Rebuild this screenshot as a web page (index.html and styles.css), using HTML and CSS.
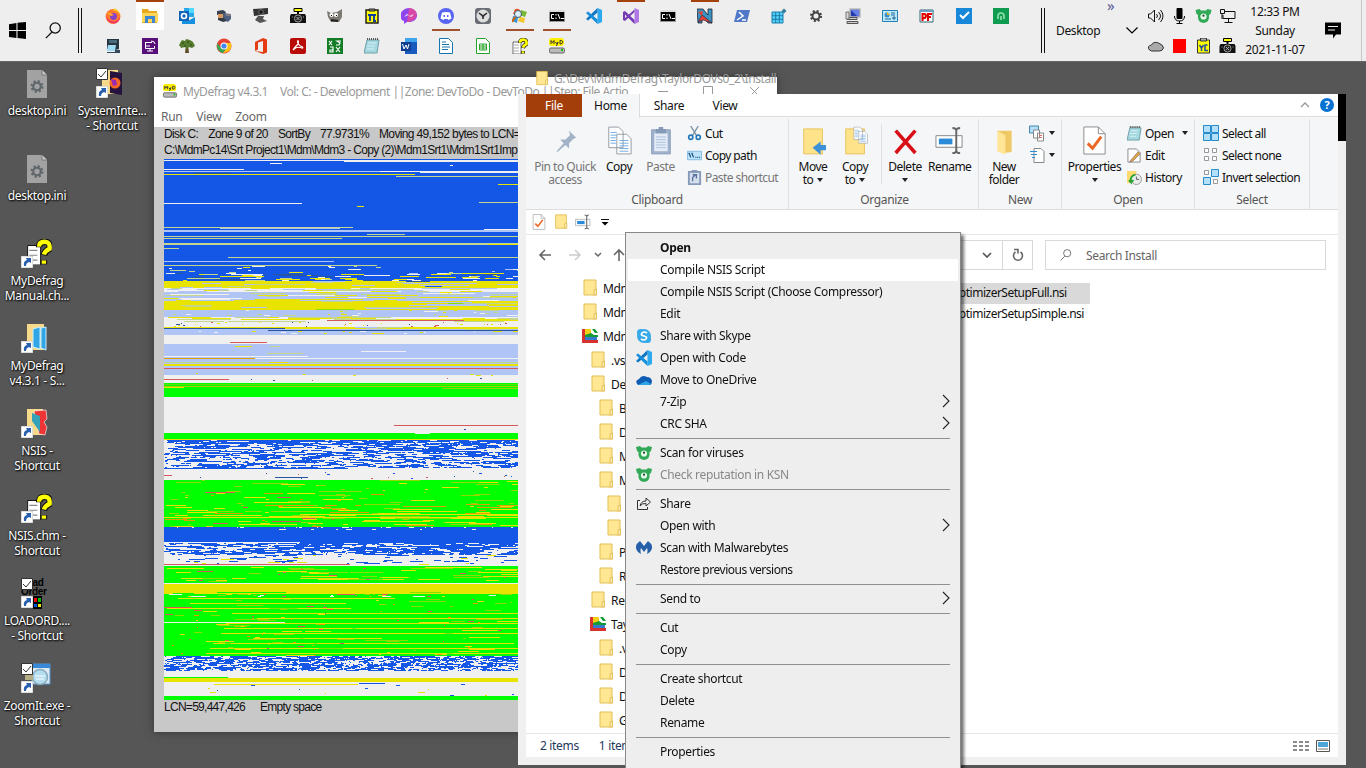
FILE: index.html
```html
<!DOCTYPE html>
<html lang="en">
<head>
<meta charset="utf-8">
<title>Desktop</title>
<link rel="stylesheet" href="styles.css">
</head>
<body>
<svg class="defs" width="0" height="0">
<defs>
<symbol id="folder" viewBox="0 0 16 18"><path d="M2 1h12v15H2z" fill="#ffe793" stroke="#e3bf55"/><path d="M12 16V11l2.500-1v6z" fill="#ffedae" stroke="#dcb548" stroke-width=".8"/></symbol>
<symbol id="firefox" viewBox="0 0 16 16"><circle cx="8" cy="8.500" r="7.400" fill="#ff7a2c"/><path d="M8 2Q9 0 10 .5q5 2 5.500 8-1-4-4-5z" fill="#ffc928"/><path d="M1 8q1 7 8 7.500 6-1 6.300-7-2 5-7 5-5-1-7.300-5.500z" fill="#f5316b"/><circle cx="8.500" cy="8.500" r="3.400" fill="#8540c8"/><path d="M2 5q3-1 5 1l2 1-3 1z" fill="#ffb028"/></symbol>
<symbol id="explorer" viewBox="0 0 16 16"><path d="M0 1h6l1 2h8v12H0z" fill="#e8a820"/><path d="M0 5h16v9H0z" fill="#ffd55a"/><path d="M3 15V8h10v7h-3v-4H6v4z" fill="#3c86d3"/></symbol>
<symbol id="outlook" viewBox="0 0 16 16"><path d="M5 0h10v9H5z" fill="#28a8ea"/><path d="M10 0h5v5h-5z" fill="#50d9ff"/><path d="M3 9l6 4 7-4v7H3z" fill="#1490df"/><path d="M0 3h10v10H0z" fill="#0f64b8"/><circle cx="5" cy="8" r="2.500" fill="none" stroke="#fff" stroke-width="1.600"/></symbol>
<symbol id="guard" viewBox="0 0 16 16"><path d="M1 3l6-1 3 2-1 2-8 1z" fill="#39424e"/><path d="M2 6h5v4H2z" fill="#d89b5d"/><path d="M7 5l8 1v5l-3 3-5-3z" fill="#4c5f81"/><path d="M2 10h6l3 3-4 1-5-2z" fill="#343c47"/><path d="M10 7h5" stroke="#b98"/></symbol>
<symbol id="webcam" viewBox="0 0 16 16"><path d="M0 1l15-1v6L1 8z" fill="#333"/><path d="M5 8h6l-1 3 4 2-7 2-5-3z" fill="#555"/><circle cx="8" cy="4" r="2.300" fill="#111" stroke="#777"/></symbol>
<symbol id="camera" viewBox="0 0 16 16"><path d="M4 .5h8v3H4z" fill="#ff0" stroke="#000"/><path d="M7 4h2v2H7z"/><path d="M1 6h14l1 2v7H0V8z" fill="#111"/><circle cx="8" cy="10.500" r="3.600" fill="#222" stroke="#bbb" stroke-width=".8"/><path d="M6.500 9l3 3m0-3l-3 3M2 9h1m10 0h1" stroke="#aaa"/></symbol>
<symbol id="gimp" viewBox="0 0 16 16"><path d="M0 3l4 2 6-1 5-3v8l-3 5H4L1 9z" fill="#7c7970"/><circle cx="4.500" cy="7" r="2" fill="#fff"/><circle cx="9" cy="7" r="2" fill="#fff"/><path d="M4 7h1v1H4zm5 0h1v1H9z"/><path d="M4 12l7 1" stroke="#222" stroke-width="2"/></symbol>
<symbol id="pi" viewBox="0 0 16 16"><path d="M2 2h12v13H2z" fill="#ff0" stroke="#222" stroke-width="1.500"/><path d="M5 1h6v2H5z" fill="#888" stroke="#222"/><path d="M4 7h8M6 7v6m4-6v6h2" stroke="#123b9d" stroke-width="1.900" fill="none"/></symbol>
<symbol id="messenger" viewBox="0 0 16 16"><path d="M8 0C-3 1-2 12 3 13v3l3-2c13 1 13-13 2-14z" fill="#8e45ed"/><path d="M8 0c12 1 9 14-2 14z" fill="#ed4b91" opacity=".75"/><path d="M3 9l3-3 3 2 4-2-3 3-3-2z" fill="#fff"/></symbol>
<symbol id="discord" viewBox="0 0 16 16"><circle cx="8" cy="8" r="8" fill="#5865f2"/><path d="M4 4.500q4-1 8 0l1.500 6-3 1.500-.7-1H6.200l-.7 1-3-1.500z" fill="#fff"/><path d="M5.500 7h1.500v2H5.500zM9 7h1.500v2H9z" fill="#5865f2"/></symbol>
<symbol id="clock" viewBox="0 0 16 16"><rect width="16" height="16" rx="3" fill="#686d73"/><circle cx="8" cy="8" r="6.500" fill="#ddd"/><path d="M4 5l4 3 4-3M8 8v3" stroke="#222" stroke-width="1.500" fill="none"/><circle cx="8" cy="8" r="1.300" fill="#333"/></symbol>
<symbol id="classic" viewBox="0 0 16 16"><path d="M3 1q3-1 5 1l-1 5-6-1z" fill="#ef5a2b"/><path d="M9 2l6 2-2 5-6-2z" fill="#79b938"/><path d="M1 8l5 1-1 6-5-2z" fill="#3692d6"/><path d="M8 9l5 1-1 5-6-2z" fill="#f6c72b"/><circle cx="6" cy="6" r="3.500" fill="#d7efff" stroke="#456"/><path d="M3 9l-3 5" stroke="#c60" stroke-width="2"/></symbol>
<symbol id="cmd" viewBox="0 0 16 16"><path d="M.5 2.500h15v11H.5z" fill="#000" stroke="#999"/><path d="M0 2h16v2H0z" fill="#ddd"/><path d="M5 6.500H2.500v4H5M7 6v1.500m0 2V11M9 6l2 5m1-.5h3" stroke="#fff" fill="none"/></symbol>
<symbol id="vscode" viewBox="0 0 16 16"><path d="M11.500 0L16 2v12l-4.500 2z" fill="#2ca9ef"/><path d="M11.500 0v4.500L2 12.500 0 11z" fill="#0f77c4"/><path d="M0 5l2-1.500 9.500 8v4.500z" fill="#168fdb"/></symbol>
<symbol id="vs" viewBox="0 0 16 16"><path d="M11.500 0L16 2v12l-4.500 2z" fill="#b078e5"/><path d="M0 4l2-1 9.500 9v4L2 6.500V10l9.500-8.500V4L2 13l-2-1z" fill="#753bb5"/></symbol>
<symbol id="nsis" viewBox="0 0 16 16"><path d="M0 1h6l5 6V1h4v14h-4L5 7v8H1z" fill="#3a93c0" stroke="#223" stroke-width=".8"/><path d="M1 14l4-7 10 8-9-3z" fill="#e44237" stroke="#223" stroke-width=".6"/><path d="M1 4l5-1-1 5z" fill="#e44237"/></symbol>
<symbol id="ps" viewBox="0 0 16 16"><path d="M3 2h13l-3 12H0z" fill="#4f78c8"/><path d="M5 4l4 4-6 4m5 0h4" stroke="#fff" stroke-width="1.500" fill="none"/></symbol>
<symbol id="reg" viewBox="0 0 16 16"><path d="M1 4h11v11H1z" fill="#55cdf4" stroke="#167fae"/><path d="M4.700 4v11m3.700-11v11M1 7.700h11M1 11.300h11" stroke="#167fae"/><path d="M13 .5l2.500 2.500-2.500 2.500L10.500 3z" fill="#397b9b"/></symbol>
<symbol id="gear" viewBox="0 0 16 16"><circle cx="8" cy="8" r="5" fill="none" stroke="currentColor" stroke-width="2.200" stroke-dasharray="2 1.927"/><circle cx="8" cy="8" r="3.500" fill="none" stroke="currentColor" stroke-width="2"/></symbol>
<symbol id="pc" viewBox="0 0 16 16"><path d="M5 1h10v8H5z" fill="#243bb0" stroke="#bbb" stroke-width="1.500"/><path d="M6 2l6 6h2V2z" fill="#6680e5"/><path d="M2 9.500h10v2H2zm0 4h11v2H2z" fill="#ccc" stroke="#555"/><path d="M1 4h3v7H1z" fill="#d8d8d8" stroke="#777"/></symbol>
<symbol id="panel" viewBox="0 0 16 16"><path d="M.5 2.500h15v11H.5z" fill="#bce8fc" stroke="#2580b5"/><circle cx="5" cy="7" r="2.500" fill="#3c8fc5"/><path d="M5 4v3h3z" fill="#fb2"/><path d="M9 5h4M9 7h4m-10 4h6m2-2h2v2h-2z" stroke="#269" fill="none"/></symbol>
<symbol id="pf" viewBox="0 0 16 16"><path d="M1 2h13v12H1z" fill="#fff" stroke="#367"/><path d="M1 2h14v2H1z" fill="#6c9ec4"/><path d="M3.500 13V6H6q2 2 0 4H4m5 3V6h4m-4 3h3" stroke="#e00000" stroke-width="2" fill="none"/></symbol>
<symbol id="todo" viewBox="0 0 16 16"><path d="M0 0h16v16H0z" fill="#1788d9"/><path d="M4 7l3 3 6-6" stroke="#fff" stroke-width="2" fill="none"/></symbol>
<symbol id="green" viewBox="0 0 16 16"><path d="M0 0h16v16H0z" fill="#109c50"/><path d="M5 11V8q0-3 3-3t3 3v3M8 8v4" stroke="#8fdfaa" stroke-width="1.700" fill="none"/></symbol>
<symbol id="diskpc" viewBox="0 0 16 16"><path d="M2 1h12v10H2z" fill="#263640"/><path d="M3 7h8l-1 6H2z" fill="#a0dbf4"/><path d="M10 11l5 1v3H2v-1h8z" fill="#33495a"/><path d="M4 2h8v3H4z" fill="#4a6a7d"/></symbol>
<symbol id="purple" viewBox="0 0 16 16"><path d="M0 0h16v16H0z" fill="#57107a"/><path d="M3 4.500h7M3.500 4v6.500h9V8M9 3q4 0 4 3M5 13h6m-3-2v2M5 7v2m2-2v2" stroke="#fff" fill="none"/></symbol>
<symbol id="tree" viewBox="0 0 16 16"><path d="M7 6h2l1 9H6z" fill="#604f27"/><path d="M1 5l2-3 3 1 1-2 4 1 3 2 2 4-3 2-3-1-2 2-2-2-4 1-1-2H0z" fill="#567b2c"/><path d="M3 5h2m3-1h2m1 3h2M5 8h2" stroke="#2e4c19"/></symbol>
<symbol id="chrome" viewBox="0 0 16 16"><circle cx="8" cy="8" r="7.500" fill="#e94235"/><path d="M1 5q-1 8 6 10l4-5-5 1z" fill="#34a853"/><path d="M8 5h7q2 9-8 10l4-5z" fill="#fbc117"/><circle cx="8" cy="8" r="3.500" fill="#fff"/><circle cx="8" cy="8" r="2.600" fill="#4285f4"/></symbol>
<symbol id="office" viewBox="0 0 16 16"><path d="M2 4l8-4 4 1.500v13L10 16l-8-3 8 1V3L5 4.500v7L2 13z" fill="#e43b13"/></symbol>
<symbol id="acrobat" viewBox="0 0 16 16"><rect width="16" height="16" rx="2" fill="#b80b08"/><path d="M3 12q2-3 5-6 1-4-.5-3 0 4 5 6 1 2-2 .5-4-1-7 2z" fill="none" stroke="#fff" stroke-width="1.200"/></symbol>
<symbol id="xa" viewBox="0 0 16 16"><path d="M0 0h16v16H0z" fill="#137d25"/><path d="M2 3l3 4m0-4L2 7m12-4h-4l3 2-1 2h-3M3 9h3v5H3v-2h3m3-3l4 5m0-5l-4 5" stroke="#fff" stroke-width="1.200" fill="none"/></symbol>
<symbol id="notepad" viewBox="0 0 16 16"><path d="M3 2h12l-2 13H0z" fill="#a4d7df" stroke="#6f9faa"/><path d="M3 1h12" stroke="#555" stroke-width="2" stroke-dasharray="1 1"/><path d="M4 5h8M3 8h8m-8 3h7" stroke="#d5f1f5"/></symbol>
<symbol id="word" viewBox="0 0 16 16"><path d="M4 0h12v16H4z" fill="#185abd"/><path d="M4 0h12v4H4z" fill="#41a5ee"/><path d="M0 4h10v9H0z" fill="#103f91"/><path d="M1.500 6L3 11l2-4 1.500 4L8 6" stroke="#fff" fill="none"/></symbol>
<symbol id="writer" viewBox="0 0 16 16"><path d="M1.500.5h9l4 4v11h-13z" fill="#fff" stroke="#1776ae"/><path d="M4 4h4M4 6.500h7M4 9h8m-8 2.500h6" stroke="#1776ae"/></symbol>
<symbol id="calc" viewBox="0 0 16 16"><path d="M1.500.5h9l4 4v11h-13z" fill="#fff" stroke="#28a329"/><path d="M4.500 6h7v6h-7zm0 2h7m-7 2h7M8 6v6" stroke="#28a329" fill="none"/></symbol>
<symbol id="chm" viewBox="0 0 16 16"><path d="M1 4h8v12H1z" fill="#fff" stroke="#111" stroke-width=".6"/><path d="M2 7h5M2 10h5M2 13h5" stroke="#888" stroke-width=".7"/><path d="M8 5q0-3.300 3.500-3.300t3 4.300q-3 1.500-3.500 4m0 3v2.500" stroke="#111" stroke-width="4" fill="none"/><path d="M8 4.700q0-3 3.500-3t3 4.300q-3 1.500-3.500 3.600m0 3.700v2" stroke="#ff0" stroke-width="2.700" fill="none"/></symbol>
<symbol id="myd" viewBox="0 0 16 16"><rect width="15" height="8" y="0" rx="3" fill="#ffef00"/><path d="M2 6V2.500l1.500 2 1.500-2V6m1.500-2L8 6l1-2-1.500 4M11 6V2.500q4 0 2 3z" stroke="#333" fill="none"/><rect x=".5" y="10" width="15" height="5" rx="1.500" fill="#bbb" stroke="#666"/><path d="M12 12h2" stroke="#1b1" stroke-width="2"/></symbol>
<symbol id="bear" viewBox="0 0 16 16"><path d="M0 2l4-1 1.500 1.500h5L12 1l4 1-1 4-1.500 1q1 7-5.500 8-6.500-1-5.500-8L1 6z" fill="#31a957"/><circle cx="8" cy="8.500" r="3.100" fill="#e5f8ea"/><circle cx="8" cy="7.700" r="1.100" fill="#174827"/></symbol>
<symbol id="cut" viewBox="0 0 16 16"><path d="M4 0l6 10M12 0L6 10" stroke="#8193a4" stroke-width="1.500"/><circle cx="4" cy="12" r="2.200" fill="none" stroke="#2477b8" stroke-width="1.800"/><circle cx="12" cy="12" r="2.200" fill="none" stroke="#2477b8" stroke-width="1.800"/></symbol>
<symbol id="pages" viewBox="0 0 28 32"><path d="M2 1h11l5 5v18H2zM11 9h11l5 5v17H11z" fill="#fff" stroke="#8b949c"/><path d="M4 7h7M4 10h7M4 13h6M4 16h6M4 19h6M14 16h10m-10 3h10m-10 3h10m-10 3h10m-10 3h10" stroke="#65a5e0"/></symbol>
<symbol id="props" viewBox="0 0 24 30"><path d="M1 1h15l7 7v21H1z" fill="#fff" stroke="#8b8b8b"/><path d="M16 1v7h7" stroke="#888" fill="none"/><path d="M5 18l5 5 9-12" stroke="#eb6726" stroke-width="3" fill="none"/></symbol>
<symbol id="rename" viewBox="0 0 30 28"><path d="M1 9h27v12H1z" fill="#fff" stroke="#878787"/><path d="M4 12h14v6H4z" fill="#2b8bd9"/><path d="M18 1q4 0 4 3 0-3 4-3m-4 3v20m-4 3q4 0 4-3 0 3 4 3" stroke="#666" stroke-width="2" fill="none"/></symbol>
<symbol id="arrowlink" viewBox="0 0 12 12"><path d="M0 0h12v12H0z" fill="#fff" stroke="#bbb"/><path d="M3 10q-1-5 3-6L5 2h5v5L8 6Q5 7 5 10z" fill="#285fae"/></symbol>
<symbol id="check" viewBox="0 0 12 12"><path d="M.5.5h11v11H.5z" fill="#fff" stroke="#333"/><path d="M2 6l3 3 5-6" stroke="#333" fill="none"/></symbol>
<symbol id="ini" viewBox="0 0 22 28"><path d="M1 0h15l5 5v23H1z" fill="#a2a2a2"/><path d="M16 0v5h5" fill="#ccc" stroke="#777"/><g transform="translate(2.500 8)" color="#5f676b"><use href="#gear" width="17" height="17"/></g></symbol>
<symbol id="sln" viewBox="0 0 16 14"><path d="M0 0h3v11h13v3H0z" fill="#d8322e"/><path d="M3 0h6v6H3z" fill="#f5cf14"/><path d="M3 6l6-2 3 2h4v2H3z" fill="#169b36"/><path d="M3 8h12v3H3z" fill="#357bd2"/><path d="M10 0h3l3 4h-3z" fill="#169b36"/></symbol>
<symbol id="search" viewBox="0 0 20 20"><circle cx="12" cy="7" r="6" fill="none" stroke="currentColor" stroke-width="1.500"/><path d="M8 12L1 19" stroke="currentColor" stroke-width="1.500"/></symbol>
<symbol id="right" viewBox="0 0 8 14"><path d="M1 1l6 6-6 6" fill="none" stroke="#222" stroke-width="1.100"/></symbol>
</defs>
</svg>

<header class="taskbar">
  <svg class="start" viewBox="0 0 16 16"><path d="M0 2l7-1v6.500H0zM8 .8L16 0v7.500H8zM0 8.500h7V15l-7-1zM8 8.500h8V16l-8-1z"/></svg>
  <svg class="tb-search"><use href="#search"/></svg>
  <i class="grip"></i>
  <nav class="apps">
    <span><svg><use href="#firefox"/></svg></span><span class="active"><svg><use href="#explorer"/></svg></span><span><svg><use href="#outlook"/></svg></span><span><svg><use href="#guard"/></svg></span><span><svg><use href="#webcam"/></svg></span><span><svg><use href="#camera"/></svg></span><span><svg><use href="#gimp"/></svg></span><span><svg><use href="#pi"/></svg></span><span><svg><use href="#messenger"/></svg></span><span class="run"><svg><use href="#discord"/></svg></span><span><svg><use href="#clock"/></svg></span><span class="run"><svg><use href="#classic"/></svg></span><span class="run"><svg><use href="#cmd"/></svg></span><span><svg><use href="#vscode"/></svg></span><span class="top"><svg><use href="#vs"/></svg></span><span><svg><use href="#cmd"/></svg></span><span class="top"><svg><use href="#nsis"/></svg></span><span><svg><use href="#ps"/></svg></span><span><svg><use href="#reg"/></svg></span><span class="gray"><svg><use href="#gear"/></svg></span><span><svg><use href="#pc"/></svg></span><span><svg><use href="#panel"/></svg></span><span><svg><use href="#pf"/></svg></span><span><svg><use href="#todo"/></svg></span><span><svg><use href="#green"/></svg></span>
    <span><svg><use href="#diskpc"/></svg></span><span><svg><use href="#purple"/></svg></span><span><svg><use href="#tree"/></svg></span><span><svg><use href="#chrome"/></svg></span><span><svg><use href="#office"/></svg></span><span><svg><use href="#acrobat"/></svg></span><span><svg><use href="#xa"/></svg></span><span><svg><use href="#notepad"/></svg></span><span><svg><use href="#word"/></svg></span><span><svg><use href="#writer"/></svg></span><span><svg><use href="#calc"/></svg></span><span><svg><use href="#chm"/></svg></span><span><svg><use href="#myd"/></svg></span>
  </nav>
  <i class="grip grip2"></i>
  <div class="deskbar"><span>Desktop</span><b>»</b></div>
  <svg class="down" viewBox="0 0 12 7"><path d="M.5.5L6 6 11.500.5" fill="none" stroke="#000" stroke-width="1.200"/></svg>
  <div class="tray">
    <svg viewBox="0 0 16 16"><path d="M1 6h2l4-4v12l-4-4H1zM9 6q2 2 0 4m2-6q4 4 0 8m2-10q5 6 0 12" fill="none" stroke="#111"/></svg>
    <svg viewBox="0 0 16 16"><rect x="5" y="0" width="6" height="11" rx="1"/><path d="M3 8q0 5 5 5t5-5M8 13v3m-3-.5h6" stroke="#000" fill="none"/></svg>
    <svg><use href="#bear"/></svg>
    <svg viewBox="0 0 16 16"><path d="M5 3.500h10.500v7H3.500V7M1 1.500h4v4H1zM2.500 6v5M9 11v3m-4 .5h8" stroke="#111" fill="none"/></svg>
    <svg viewBox="0 0 16 16"><path d="M2 12q-3-4 2-5 2-4 7-2 5 2 5 5-1 3-4 3H4z" fill="#aaa" stroke="#333"/></svg>
    <svg viewBox="0 0 16 16"><path d="M1.500 1h13v14h-13z" fill="#f00"/></svg>
    <svg viewBox="0 0 16 16"><path d="M2 2h12v13H2z" fill="#ff0" stroke="#333"/><path d="M5 0h6v3H5z" fill="#aaa" stroke="#333"/><path d="M4 7l2 3v3m2-6l-2 3m6-3H9.500v5.500h3" stroke="#224b9d" stroke-width="1.500" fill="none"/></svg>
    <svg><use href="#camera"/></svg>
  </div>
  <div class="time">12:33 PM<br>Sunday<br>2021-11-07</div>
  <svg class="notif" viewBox="0 0 16 16"><path d="M0 0h16v12h-5l-3 4v-4H0z"/><path d="M3 4h10M3 7.500h7" stroke="#eee" stroke-width="1.200"/></svg>
  <i class="edge"></i>
</header>

<main class="desktop">
  <section class="shortcuts">
    <div><svg class="ini"><use href="#ini"/></svg><p>desktop.ini</p></div>
    <div><svg class="ini"><use href="#ini"/></svg><p>desktop.ini</p></div>
    <div><svg viewBox="0 0 32 32"><use href="#chm" x="5" y="1" width="26" height="26"/><use href="#arrowlink" x="0" y="18" width="12" height="12"/></svg><p>MyDefrag<br>Manual.ch...</p></div>
    <div><svg viewBox="0 0 32 32"><path d="M6 1h17v26H6z" fill="#f7d98b"/><path d="M12 6l7-2v22l-7-2zm8-1l5-1v23l-5-2z" fill="#31a6e7" stroke="#c9efff"/><use href="#arrowlink" x="0" y="18" width="12" height="12"/></svg><p>MyDefrag<br>v4.3.1 - S...</p></div>
    <div><svg viewBox="0 0 32 32"><path d="M6 1h16v26H6z" fill="#f7d98b"/><path d="M13 3l12-1 1 9-3 3 3 5-2 8-6-1z" fill="#ee3434" stroke="#fff" stroke-width=".6"/><path d="M11 5l8 3v16l-8-11z" fill="#35a2b9"/><use href="#arrowlink" x="0" y="18" width="12" height="12"/></svg><p>NSIS -<br>Shortcut</p></div>
    <div><svg viewBox="0 0 32 32"><use href="#chm" x="5" y="1" width="26" height="26"/><use href="#arrowlink" x="0" y="18" width="12" height="12"/></svg><p>NSIS.chm -<br>Shortcut</p></div>
    <div><svg viewBox="0 0 32 32"><text x="0" y="8" class="load">Load</text><text x="0" y="17" class="load">Order</text><path d="M12 18h9v13h-9z"/><path d="M13 20h3v4h-3z" fill="#e00"/><path d="M17 20h3v4h-3z" fill="#0b0"/><path d="M13 26h3v3h-3z" fill="#05d"/><path d="M17 26h3v3h-3z" fill="#ee0"/><use href="#check" x="0" y="0" width="12" height="12"/><use href="#arrowlink" x="0" y="18" width="12" height="12"/></svg><p>LOADORD....<br>- Shortcut</p></div>
    <div><svg viewBox="0 0 32 32"><path d="M11 1h18v20H11z" fill="#dceaf5" stroke="#5694ce"/><path d="M11 1h18v4H11z" fill="#3989d8"/><circle cx="19" cy="14" r="7.500" fill="#b5ddf0" stroke="#8aabba" stroke-width="1.500"/><path d="M14 13h10m-9 3h8" stroke="#fff"/><path d="M4 12h8v5H4z" fill="#b5ad83"/><use href="#check" x="0" y="0" width="12" height="12"/><use href="#arrowlink" x="0" y="18" width="12" height="12"/></svg><p>ZoomIt.exe -<br>Shortcut</p></div>
    <div><svg viewBox="0 0 32 32"><path d="M6 2h16v24H6z" fill="#f7d98b"/><path d="M14 3l12 2v22l-12-2z" fill="#25133d"/><circle cx="19" cy="15" r="5.500" fill="#f76624"/><path d="M15 11l5 1 1 5-4 1z" fill="#9a2bb0"/><use href="#check" x="0" y="0" width="12" height="12"/><use href="#arrowlink" x="0" y="18" width="12" height="12"/></svg><p>SystemInte...<br>- Shortcut</p></div>
  </section>

  <section class="defrag">
    <div class="dtitle"><svg><use href="#myd"/></svg><span class="dname">MyDefrag v4.3.1</span><span class="dvol">Vol: C: - Development ||Zone: DevToDo - DevToDo ||Step: File Actio...</span>
      <svg class="wctl" viewBox="0 0 104 12"><path d="M0 6.500h10M45.500 1.500h9v9h-9zM92 2l9 9m0-9l-9 9" fill="none" stroke="#999"/></svg></div>
    <div class="dmenu"><span>Run</span><span>View</span><span>Zoom</span></div>
    <div class="dbody">
      <div class="dinfo"><span>Disk C:</span><span>Zone 9 of 20</span><span>SortBy</span><span>77.9731%</span><span>Moving 49,152 bytes to LCN=</span></div>
      <div class="dpath">C:\MdmPc14\Srt Project1\Mdm\Mdm3 - Copy (2)\Mdm1Srt1\Mdm1Srt1Imp</div>
      <canvas id="map" width="603" height="541"></canvas>
      <div class="dfoot"><span>LCN=59,447,426</span><span>Empty space</span></div>
    </div>
  </section>

  <div class="ghost"><svg><use href="#folder"/></svg><span>G:\Dev\MdmDefrag\TaylorDOVs0_2\Install</span></div>

  <section class="explorer">
    <i class="black"></i>
    <div class="tabs"><span class="file">File</span><span class="home">Home</span><span>Share</span><span>View</span>
      <svg class="collapse" viewBox="0 0 10 6"><path d="M1 5l4-4 4 4" fill="none" stroke="#999" stroke-width="1.300"/></svg>
      <b class="help">?</b></div>
    <div class="ribbon">
      <div class="group clip"><div class="tools">
        <div class="big dim w78"><svg viewBox="0 0 28 32"><path d="M18 5l8 8-3 1-5 5v6l-4-4-9 8-1-1 8-9-4-4h6l5-5z" fill="#a2b3c8"/></svg>Pin to Quick<br>access</div>
        <div class="big w30"><svg><use href="#pages"/></svg>Copy</div>
        <div class="big dim w53"><svg viewBox="0 0 28 32"><path d="M4 4h21v27H4z" fill="#9fb1cb" stroke="#899cba"/><path d="M7 8h15v20H7z" fill="#e3ebf6"/><path d="M9 3h3V1h5v2h3v5H9z" fill="#8299b7"/><path d="M9 12h11M9 15h11M9 18h11M9 21h11M9 24h11" stroke="#a9bedb"/></svg>Paste</div>
        <div class="small"><p><svg><use href="#cut"/></svg>Cut</p><p><svg viewBox="0 0 16 16"><path d="M.5 3.500h15v9H.5z" fill="#bce3fa" stroke="#82bce2"/><path d="M2 5l2 5M5 5l2 5m2 0h1m1 0h1m1 0h1" stroke="#134d7e" stroke-width="1.300"/></svg>Copy path</p><p class="dim"><svg viewBox="0 0 16 16"><path d="M2 2h12v13H2z" fill="#d7e1ee" stroke="#879bb9" stroke-width="2"/><path d="M5 0h6v3H5z" fill="#879bb9"/><path d="M6 12V8l3-3M6 5h4v4" stroke="#58749d" stroke-width="1.500" fill="none"/></svg>Paste shortcut</p></div>
      </div><label>Clipboard</label></div>
      <div class="group org"><div class="tools">
        <div class="big w44"><svg viewBox="0 0 28 32"><path d="M3 3h21v28H3z" fill="#ffe38b" stroke="#e5c057"/><path d="M13 24l9-7v4h6v6h-6v5z" fill="#3d91d8"/></svg>Move<br>to<i></i></div>
        <div class="big w40"><svg viewBox="0 0 28 32"><path d="M3 3h21v28H3z" fill="#ffe38b" stroke="#e5c057"/><use href="#pages" x="11" y="0" width="17" height="20"/></svg>Copy<br>to<i></i></div>
        <div class="big w60 line"><svg viewBox="0 0 28 32"><path d="M3 5l22 25M25 5L3 30" stroke="#d90f18" stroke-width="4"/></svg>Delete<br><i></i></div>
        <div class="big w42"><svg><use href="#rename"/></svg>Rename</div>
      </div><label>Organize</label></div>
      <div class="group new"><div class="tools">
        <div class="big w50"><svg viewBox="0 0 28 32"><path d="M6 5h16v24l-9 1z" fill="#f0c866"/><path d="M6 5l9 5v22l-9-4z" fill="#ffe596"/></svg>New<br>folder</div>
        <div class="minis"><p><svg viewBox="0 0 16 16"><path d="M.5.500h9v7h-9z" fill="#b5e0fa" stroke="#48a"/><path d="M4.500 4.500h6v8h-6zM8.500 7.500h6v8h-6z" fill="#fff" stroke="#888"/><path d="M10 10h3m-3 2h3" stroke="#d66"/></svg><i></i></p><p><svg viewBox="0 0 16 16"><path d="M5 1h7l3 3v11H5z" fill="#fff" stroke="#888"/><path d="M1 4h7M2 7h6M3 10h3" stroke="#288cd7"/></svg><i></i></p></div>
      </div><label>New</label></div>
      <div class="group open"><div class="tools">
        <div class="big w65"><svg><use href="#props"/></svg>Properties<br><i></i></div>
        <div class="small"><p><svg><use href="#notepad"/></svg>Open<i></i></p><p><svg viewBox="0 0 16 16"><path d="M1 1h9l4 4v10H1z" fill="#fff" stroke="#888"/><path d="M4 13l8-9 2 2-8 8-3 1z" fill="#e4ad3b" stroke="#977"/></svg>Edit</p><p><svg viewBox="0 0 16 16"><path d="M0 1h10v13H0z" fill="#ffdb70"/><circle cx="10" cy="10" r="5.500" fill="#e8eceb" stroke="#999"/><path d="M9 5q-6 1-5 8l-2-2m2 2l3-2" stroke="#25a532" stroke-width="2" fill="none"/><path d="M10 7v3h3" stroke="#555" fill="none"/></svg>History</p></div>
      </div><label>Open</label></div>
      <div class="group sel"><div class="tools"><div class="small"><p><svg viewBox="0 0 16 16"><path d="M.5.500h7v7h-7zM8.500.500h7v7h-7zM.5 8.500h7v7h-7zM8.500 8.500h7v7h-7z" fill="#b5e0fa" stroke="#278acb"/></svg>Select all</p><p><svg viewBox="0 0 16 16"><path d="M1.500 1.500h4v4h-4zM9.500 1.500h4v4h-4zM1.500 9.500h4v4h-4zM9.500 9.500h4v4h-4z" fill="#fff" stroke="#999"/></svg>Select none</p><p><svg viewBox="0 0 16 16"><path d="M8.500.500h7v7h-7zM.5 8.500h7v7h-7z" fill="#b5e0fa" stroke="#278acb"/><path d="M1.500 1.500h4v4h-4zM10.500 10.500h4v4h-4z" fill="#fff" stroke="#999"/></svg>Invert selection</p></div></div><label>Select</label></div>
    </div>
    <div class="qat"><svg><use href="#props"/></svg><svg><use href="#folder"/></svg><svg><use href="#rename"/></svg><svg class="q4" viewBox="0 0 8 7"><path d="M0 .5h8" stroke="#111"/><path d="M.5 3h7L4 6.500z"/></svg></div>
    <div class="address">
      <svg class="navs" viewBox="0 0 90 16"><path d="M2 8h11M7 3L2 8l5 5" stroke="#666" stroke-width="1.600" fill="none"/><path d="M31 8h11m-5-5l5 5-5 5" stroke="#ccc" stroke-width="1.500" fill="none"/><path d="M57 6l3 3 3-3" stroke="#666" stroke-width="1.500" fill="none"/><path d="M81 14V3m-5 5l5-5 5 5" stroke="#666" stroke-width="1.600" fill="none"/></svg>
      <div class="crumbs"><span><svg viewBox="0 0 10 6"><path d="M1 1l4 4 4-4" stroke="#555" stroke-width="1.700" fill="none"/></svg></span><span><svg class="reload" viewBox="0 0 14 14"><path d="M9.500 4a4.500 4.500 0 1 1-5 0M3 1.500h4v4" stroke="#666" stroke-width="1.600" fill="none"/></svg></span></div>
      <div class="sbox"><svg><use href="#search"/></svg>Search Install</div>
    </div>
    <div class="content">
      <ul class="treeview">
        <li><svg><use href="#folder"/></svg>MdmDefrag</li><li><svg><use href="#folder"/></svg>MdmDocs</li><li><svg class="s"><use href="#sln"/></svg>MdmSrt</li><li class="l1"><svg><use href="#folder"/></svg>.vs</li><li class="l1"><svg><use href="#folder"/></svg>Debug</li><li class="l2"><svg><use href="#folder"/></svg>Bin</li><li class="l2"><svg><use href="#folder"/></svg>Docs</li><li class="l2"><svg><use href="#folder"/></svg>Mdm</li><li class="l2"><svg><use href="#folder"/></svg>Mdm1</li><li class="l3"><svg><use href="#folder"/></svg></li><li class="l3"><svg><use href="#folder"/></svg></li><li class="l2"><svg><use href="#folder"/></svg>Properties</li><li class="l2"><svg><use href="#folder"/></svg>Release</li><li class="l1"><svg><use href="#folder"/></svg>Release</li><li class="l1"><svg class="s"><use href="#sln"/></svg>Taylor</li><li class="l2"><svg><use href="#folder"/></svg>.vs</li><li class="l2"><svg><use href="#folder"/></svg>Debug</li><li class="l2"><svg><use href="#folder"/></svg>Docs</li><li class="l2"><svg><use href="#folder"/></svg>Graphics</li>
      </ul>
      <div class="files"><p class="on">OptimizerSetupFull.nsi</p><p>OptimizerSetupSimple.nsi</p></div>
    </div>
    <footer><span>2 items</span><span>1 item selected</span>
      <svg viewBox="0 0 38 12"><path d="M0 2h4M0 6h4M0 10h4m2-8h4M6 6h4m-4 4h4m2-8h4m-4 4h4m-4 4h4" stroke="#666" stroke-width="1.300"/><path d="M23.500.5h13v11h-13z" fill="#fff" stroke="#555"/><path d="M25 2h10v5H25z" fill="#4ba5d8"/><path d="M25 9h10" stroke="#777"/></svg></footer>
  </section>

  <menu class="ctx">
    <li class="bold">Open</li><li class="hot">Compile NSIS Script</li><li>Compile NSIS Script (Choose Compressor)</li><li>Edit</li>
    <li><svg viewBox="0 0 16 16"><circle cx="8" cy="8" r="7" fill="#36a9e8"/><circle cx="4.500" cy="4.500" r="3.500" fill="#36a9e8"/><circle cx="11.500" cy="11.500" r="3.500" fill="#36a9e8"/><path d="M11 5Q8 3 6 5t2 3 2 3-5 0" stroke="#fff" stroke-width="1.700" fill="none"/></svg>Share with Skype</li>
    <li><svg><use href="#vscode"/></svg>Open with Code</li>
    <li><svg viewBox="0 0 16 16"><path d="M2 13q-4-4 1-6 3-5 8-2 4 0 5 4 0 3-2 4z" fill="#0f5cb4"/><path d="M2 13l8-4 5 3-2 1z" fill="#2ba4e8"/></svg>Move to OneDrive</li>
    <li>7-Zip<svg class="r"><use href="#right"/></svg></li><li>CRC SHA<svg class="r"><use href="#right"/></svg></li><hr>
    <li><svg><use href="#bear"/></svg>Scan for viruses</li><li class="off"><svg><use href="#bear"/></svg>Check reputation in KSN</li><hr>
    <li><svg viewBox="0 0 16 16"><path d="M4 4.500H1.500v9h10V11M4 10q1-5 6-5V2l4.500 4L10 10V7.500Q6 7 4 10z" stroke="#333" fill="none"/></svg>Share</li><li>Open with<svg class="r"><use href="#right"/></svg></li>
    <li><svg viewBox="0 0 16 16"><path d="M4 1l4 5 4-5q7 5 2 11l-3 2q1-4 0-6l-3 4-3-4q-1 2 0 6l-3-2Q-3 6 4 1z" fill="#2560a9"/></svg>Scan with Malwarebytes</li><li class="tight">Restore previous versions</li><hr>
    <li>Send to<svg class="r"><use href="#right"/></svg></li><hr><li>Cut</li><li>Copy</li><hr><li>Create shortcut</li><li>Delete</li><li>Rename</li><hr><li>Properties</li>
  </menu>
</main>
<script src="map.js"></script>
</body>
</html>
```

FILE: styles.css
```css
*{box-sizing:border-box}
body{margin:0;width:1366px;height:768px;overflow:hidden;background:#565656;font:12px/15px "Noto Sans","Open Sans",sans-serif;letter-spacing:-.33px;color:#111}
p,ul,menu{margin:0;padding:0;list-style:none}
svg{flex:none}
.defs{position:absolute}
.taskbar{height:62px;margin-bottom:-1px;background:#eee;border-bottom:1px solid #666;display:flex;align-items:center}
.start{width:17px;height:17px;margin-left:9px}
.tb-search{width:17px;height:17px;margin-left:19px}
.grip{width:4px;height:45px;margin-left:16px;border:solid #111;border-width:0 1px}
.apps{display:grid;grid-template-columns:repeat(25,37px);grid-template-rows:31px 30px;margin-left:12px;width:925px;height:61px}
.apps span{display:flex;align-items:center;justify-content:center}
.apps svg{width:16px;height:16px}
.apps .active{background:linear-gradient(#a5410d 2px,#fff 2px) center top/28px 30px no-repeat}
.apps .run{background:linear-gradient(#a0522d,#a0522d) center bottom/28px 2px no-repeat}
.apps .top{background:linear-gradient(#a5410d,#a5410d) center top/28px 2px no-repeat}
.gray{color:#444}
.grip2{margin-left:22px}
.deskbar{width:58px;margin-left:11px;display:flex;align-items:center;position:relative}
.deskbar b{position:absolute;left:51px;top:-25px;color:#5a5a96;font-size:15px;font-weight:400}
.down{width:12px;height:7px;margin-left:12px}
.tray{display:grid;grid-template-columns:repeat(4,24px);grid-template-rows:30px 30px;place-items:center;margin-left:5px;height:60px}
.tray svg{width:17px;height:16px}
.time{width:72px;text-align:center;line-height:19px}
.notif{width:16px;height:17px;margin-left:14px}
.edge{margin-left:20px;width:1px;height:61px;background:#c8c8c8}
.desktop{height:707px}
.shortcuts{display:grid;grid-template-rows:repeat(8,85px);grid-auto-flow:column;grid-template-columns:74px 76px;width:150px}
.shortcuts div{padding-top:7px;display:flex;flex-direction:column;align-items:center;color:#fff;text-shadow:1px 1px 2px #000,0 0 2px #000}
.shortcuts svg{width:32px;height:32px;margin-bottom:3px}
.shortcuts .ini{height:28px;margin:2px 0 5px}
.shortcuts p{text-align:center;white-space:nowrap}
.load{font:bold 10px "Liberation Sans",sans-serif;fill:#000;text-shadow:none}
.defrag{position:absolute;left:154px;top:77px;width:623px;height:655px;background:#fff;box-shadow:0 0 8px #333;overflow:hidden;white-space:nowrap}
.dtitle{height:28px;display:flex;align-items:center;color:#999;padding-left:8px}
.dtitle svg{width:16px;height:14px}
.dname{margin-left:5px;width:97px;letter-spacing:-.45px}
.dvol{width:356px;letter-spacing:-.49px}
.dtitle .wctl{width:104px;height:12px;margin-left:22px}
.dmenu{display:flex;gap:14px;padding:4px 7px;height:22px;color:#666}
.dbody{background:#c8c8c8;height:605px;padding-left:10px;font:12px/16px "Liberation Sans",sans-serif;letter-spacing:-.67px}
.dinfo{display:flex;gap:10px;height:15px;line-height:14px;letter-spacing:-.64px}
.dpath{height:17px}
#map{display:block}
.dfoot{display:flex;gap:15px;line-height:15px;letter-spacing:-.72px}
.ghost{position:absolute;left:535px;top:70px;width:242px;height:24px;overflow:hidden;white-space:nowrap;display:flex;color:#999}
.ghost svg{width:14px;height:17px;margin-right:5px}
.ghost span{line-height:17px;letter-spacing:-.4px}
.explorer{position:absolute;left:518px;top:94px;width:828px;height:671px;background:#fff;border:solid #f0f0f0;border-width:0 8px}
.black{position:absolute;right:-8px;top:0;width:8px;height:47px;background:#000}
.tabs{height:23px;display:flex;align-items:center;border-bottom:1px solid #ddd}
.tabs span{width:56px;text-align:center;line-height:23px;height:23px}
.tabs .file{background:#a33e0b;color:#fff}
.tabs .home{width:58px;margin-right:1px;background:#f5f6f7;border-right:1px solid #ddd;height:24px;margin-top:1px}
.collapse{width:10px;height:6px;margin-left:547px}
.help{width:14px;height:14px;border-radius:50%;background:#0872d1;color:#fff;line-height:14px;font-size:11px;text-align:center;margin-left:10px}
.ribbon{height:92px;background:#f5f6f7;display:flex;letter-spacing:-.5px}
.group{border-right:1px solid #e0e1e2;height:90px;margin-top:2px;display:flex;flex-direction:column}
.group label{height:17px;text-align:center;color:#555;line-height:16px;letter-spacing:-.33px}
.tools{display:flex;height:73px}
.clip{width:263px}.org{width:190px;padding-left:2px}.new{width:83px}.open{width:133px}.sel{width:115px}
.big{flex:none;text-align:center;line-height:13px;padding-top:7px;white-space:nowrap}
.big svg{display:block;width:25px;height:29px;margin:0 auto 5px}
.big i,.small i,.minis i{display:inline-block;border:3px solid transparent;border-top:4px solid #222;border-bottom:0;margin-left:4px;vertical-align:2px}
.w78{width:78px}.w30{width:30px}.w53{width:53px}.w44{width:44px}.w50{width:50px}.w40{width:40px}.w65{width:65px}.w60{width:60px}
.w42{width:42px;margin-left:-7px}
.w42 svg{width:29px}
.line{background:linear-gradient(#e0e1e2,#e0e1e2) 6px 5px/1px 60px no-repeat}
.line i,.w65 i{margin-left:0}
.dim{color:#777}
.small{padding-top:3px}
.small p{display:flex;align-items:center;height:22px;white-space:nowrap}
.small svg{width:15px;height:15px;margin-right:3px}
.clip .small{letter-spacing:-.58px}
.small i{margin-left:8px}
.sel .small{padding-left:8px;letter-spacing:-.55px}
.sel .small svg{width:16px;height:16px}
.minis{padding-top:3px}
.minis p{height:22px;display:flex;align-items:center}
.minis svg{width:16px;height:17px}
.qat{height:26px;border-top:1px solid #ddd;border-bottom:1px solid #e8e8e8;display:flex;align-items:center;padding-left:5px;gap:6px}
.qat svg{width:16px;height:16px}
.qat .q4{width:8px;height:7px;margin-left:4px}
.address{height:40px;display:flex;align-items:center;padding-left:12px}
.navs{width:90px;height:16px}
.crumbs{width:405px;height:30px;border:1px solid #d9d9d9;display:flex;justify-content:flex-end}
.crumbs span{width:30px;display:flex;align-items:center;justify-content:center}
.crumbs span+span{border-left:1px solid #d9d9d9}
.crumbs svg{width:10px;height:6px}.crumbs .reload{width:14px;height:14px}
.sbox{width:281px;height:30px;border:1px solid #d9d9d9;margin-left:12px;padding-left:14px;display:flex;align-items:center;color:#666}
.sbox svg{width:12px;height:12px;margin-right:14px}
.content{height:458px;display:flex;padding-top:1px}
.treeview{width:404px;padding-left:56px}
.treeview li{height:24px;display:flex;align-items:center}
.treeview svg{width:16px;height:18px;margin-right:5px}
.treeview .s{height:14px}
.treeview .l1{padding-left:8px}.treeview .l2{padding-left:16px}.treeview .l3{padding-left:24px}
.files{padding-top:7px;letter-spacing:-.5px}
.files p{width:160px;height:21px;padding-left:20px;line-height:20px}
.files .on{background:#d9d9d9}
.explorer footer{height:32px;border-top:1px solid #e5e5e5;border-bottom:8px solid #f0f0f0;display:flex;align-items:center;padding-left:14px;color:#1e395b}
.explorer footer span+span{margin-left:20px}
.explorer footer svg{width:38px;height:12px;margin-left:auto;margin-right:7px}
.ctx{position:absolute;left:625px;top:232px;width:336px;height:540px;background:#eee;border:1px solid #888;box-shadow:3px 3px 3px rgba(0,0,0,.55);padding:4px 2px}
.ctx li{height:22px;display:flex;align-items:center;padding:0 0 2px 32px;white-space:nowrap}
.ctx li svg{width:16px;height:16px;margin:2px 8px 0 -24px}
.ctx li .r{width:8px;height:14px;margin:0 8px 0 auto}
.ctx hr{height:1px;border:0;background:#909090;margin:3px 8px}
.ctx .hot{background:#fff}
.ctx .bold{font-weight:700}
.ctx .off{color:#888}
.ctx .tight{letter-spacing:-.48px}
```

FILE: map.js
```js
// Paints the disk map: horizontal bands of cluster colours with fragment streaks.
const ctx = document.getElementById('map').getContext('2d');
const X = 164, Y = 159, W = 603;
const B = '#1456e6', D = '#28559b', L = '#b0c4f5', F = '#f0f0f0', E = '#e8e400', G = '#00ff00', R = '#d65a5a', O = '#e0a000', K = '#8fdc00', T = '#c3d68b';
let seed = 77;
const rnd = () => (seed = (seed * 16807) % 2147483647) / 2147483647;
const rect = (c, x, y, w, h) => { ctx.fillStyle = c; ctx.fillRect(x - X, y - Y, w, h); };
const band = (c, y0, y1) => rect(c, X, y0, W, y1 - y0);
const line = (c, y, x0 = X, x1 = X + W, h = 1) => rect(c, Math.round(x0), y, Math.round(x1 - x0), h);
const streaks = (colors, y0, y1, perRow, minLen, maxLen) => {
  for (let y = y0; y < y1; y++)
    for (let i = 0; i < perRow; i++) {
      const n = minLen + Math.floor(rnd() * rnd() * (maxLen - minLen));
      rect(colors[Math.floor(rnd() * colors.length)], X + Math.floor(rnd() * W), y, n, 1);
    }
};
const bands = [
  [B, 159, 281], [E, 281, 288], [F, 288, 292], [L, 292, 301], [E, 301, 310], [L, 310, 317],
  [F, 317, 327], [E, 327, 329], [L, 329, 335], [F, 335, 344], [L, 344, 375], [F, 375, 383],
  [G, 383, 397], [F, 397, 433], [G, 433, 439], [E, 439, 440], [F, 440, 480], [G, 480, 527],
  [B, 527, 543], [F, 543, 566], [G, 566, 584], [E, 584, 594], [G, 594, 656], [F, 656, 678],
  [E, 678, 682], [F, 682, 696], [G, 696, 700]
];
bands.forEach(b => band(...b));

line(F, 160); line(F, 161, 344); line(F, 163, 270, 282); line(F, 165, 450, 453);
line(F, 169, 164, 244); line(L, 171, 164, 380); line(F, 171, 380); line(F, 172, 420);
line(D, 173, 194, 230); line(E, 174, 164, 415); line(T, 176, 396); line(E, 184, 498);
line(F, 203, 164, 302); line(T, 202, 479); line(E, 206, 357, 364); line(T, 227, 164, 353);
line(L, 228, 220, 340); line(F, 229, 484); line(L, 230, 164, 767, 2); line(T, 234, 367, 405);
line(T, 236); line(T, 238, 164, 342); line(T, 243, 164, 767, 2); line(E, 244, 488);
line(T, 248, 164, 179); line(T, 257, 228); line(L, 261, 164, 334); line(T, 265, 164, 377);
streaks([T, E, F, L], 266, 275, 5, 3, 30); streaks([T, E, D, F], 273, 281, 12, 4, 45);
streaks([D, B, T, L], 281, 288, 4, 10, 110); streaks([T, E, L], 288, 293, 8, 10, 100);
streaks([T, E, F], 293, 301, 8, 15, 130); streaks([T, L, K], 301, 310, 3, 15, 130);
streaks([E, F, T], 310, 317, 8, 2, 20); streaks([E, T], 317, 322, 9, 20, 120);
line(R, 320, 327, 464); streaks([E, D, R, F], 322, 327, 18, 1, 5); streaks([T, L], 327, 330, 5, 20, 100);
line(D, 328, 164, 285); line(D, 330, 268); streaks([E, F], 331, 334, 10, 1, 14);
line(R, 342, 230, 267); line(E, 346, 235, 252); line(T, 346, 270, 280); line(F, 351, 361, 406);
line(T, 353, 267, 303); line(F, 356, 164, 308); line(O, 358, 164, 255); line(F, 358, 255);
line(T, 362); line(E, 364, 164, 767, 2); line(E, 362, 270, 288); line(R, 368);
streaks([E], 373, 376, 3, 2, 9); line(R, 379, 164, 229); streaks([D, R], 378, 382, 2, 1, 3);
line('#5fe000', 384); line('#a9cf00', 386); line(E, 387, 164, 184); line(K, 388, 442);
line(R, 425, 394); line(D, 429, 464, 466); line(F, 433, 415, 430);

streaks([B], 440, 445, 100, 1, 34); streaks([B], 445, 458, 62, 1, 30); streaks([B], 458, 468, 52, 1, 28);
streaks([F], 444, 466, 12, 1, 12); streaks([F], 448, 452, 4, 30, 100);
streaks([B, B, D, R], 471, 479, 4, 1, 4); line(B, 468, 164, 348); line(D, 477, 275, 308); line(R, 475, 164, 172);
streaks([E, K, K], 480, 505, 3, 2, 50); streaks([O, R], 492, 527, 1, 2, 40);
streaks([E, E, K, O], 505, 527, 8, 3, 70); line(E, 517, 164, 767); line(E, 514, 300, 540);
streaks([F], 527, 528, 40, 1, 8); streaks([F], 529, 530, 14, 2, 25); line(F, 542, 164, 300);
streaks([B], 543, 549, 55, 2, 40); streaks([B], 549, 555, 80, 1, 28); streaks([B, B, B, E], 555, 565, 11, 2, 25);
line(R, 564, 164, 350); streaks([E, K, K, E], 567, 582, 5, 10, 90); streaks([O, R], 568, 582, 1, 2, 40); line(F, 583);
streaks([K, G], 592, 594, 4, 20, 100); streaks([R, E, K, F], 594, 597, 14, 2, 20);
for (let y = 598; y < 654; y += 5) line(E, y, X + rnd() * 120, X + 160 + rnd() * 443);
streaks([E, K, K], 599, 656, 2, 2, 50); streaks([R, O], 599, 656, 1, 1, 12);
line(F, 622, 164, 285); line(R, 607, 164, 192); line(E, 613, 232, 320);
streaks([B], 656, 671, 150, 1, 16); streaks([F], 660, 671, 20, 1, 10);
line(G, 677, 164, 228); line(E, 684, 214, 358); line(B, 683, 359, 385);
streaks([B, E], 684, 696, 2, 1, 14);
```
